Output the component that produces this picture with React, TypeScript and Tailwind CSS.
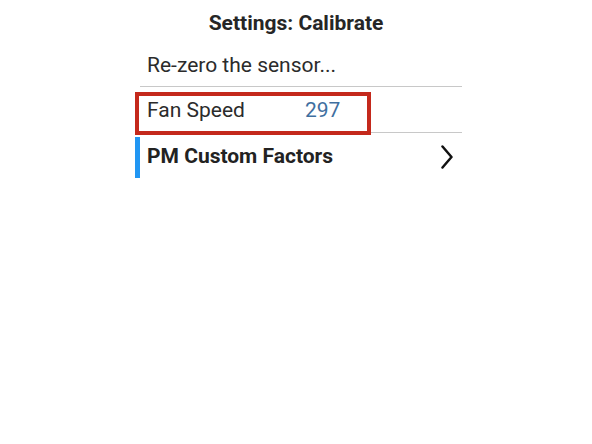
import React from "react";

export default function App() {
  return (
    <div
      className="w-[592px] h-[444px] bg-white relative"
      style={{ fontFamily: "Roboto, 'Liberation Sans', sans-serif" }}
    >
      <div className="h-[42px] flex items-center justify-center pt-[5px]">
        <span className="text-[21px] font-bold text-[#262626]">Settings: Calibrate</span>
      </div>
      <div className="ml-[135px] w-[327px] flex flex-col">
        <div className="flex h-[45px]">
          <div className="w-[5px]" />
          <div className="flex-1 flex items-center border-b border-[#c8c8c8] pl-[7px] pt-[3px]">
            <span className="text-[21px] text-[#2b2b2b]">Re-zero the sensor...</span>
          </div>
        </div>
        <div className="flex h-[46px] relative">
          <div className="w-[5px]" />
          <div className="flex-1 flex items-center border-b border-[#c8c8c8] pl-[7px] pt-[3px]">
            <span className="w-[158px] text-[21px] text-[#2b2b2b]">Fan Speed</span>
            <span className="text-[21px] text-[#3f6f9f]">297</span>
          </div>
          <div className="absolute left-0 top-[5px] w-[236px] h-[43px] border-[4px] border-[#c4291c]" />
        </div>
        <div className="flex h-[46px]">
          <div className="w-[5px] pt-[4px] pb-[1px]">
            <div className="h-full bg-[#2196f3]" />
          </div>
          <div className="flex-1 flex items-center justify-between pl-[7px] pr-[9px] pt-[2px]">
            <span className="text-[21px] font-bold text-[#222222]">PM Custom Factors</span>
            <svg width="12" height="24" viewBox="0 0 12 24" fill="none">
              <path d="M1.5 1.5 L10.5 12 L1.5 22.5" stroke="#111" strokeWidth="2.5" strokeLinecap="round" strokeLinejoin="round" />
            </svg>
          </div>
        </div>
      </div>
    </div>
  );
}
